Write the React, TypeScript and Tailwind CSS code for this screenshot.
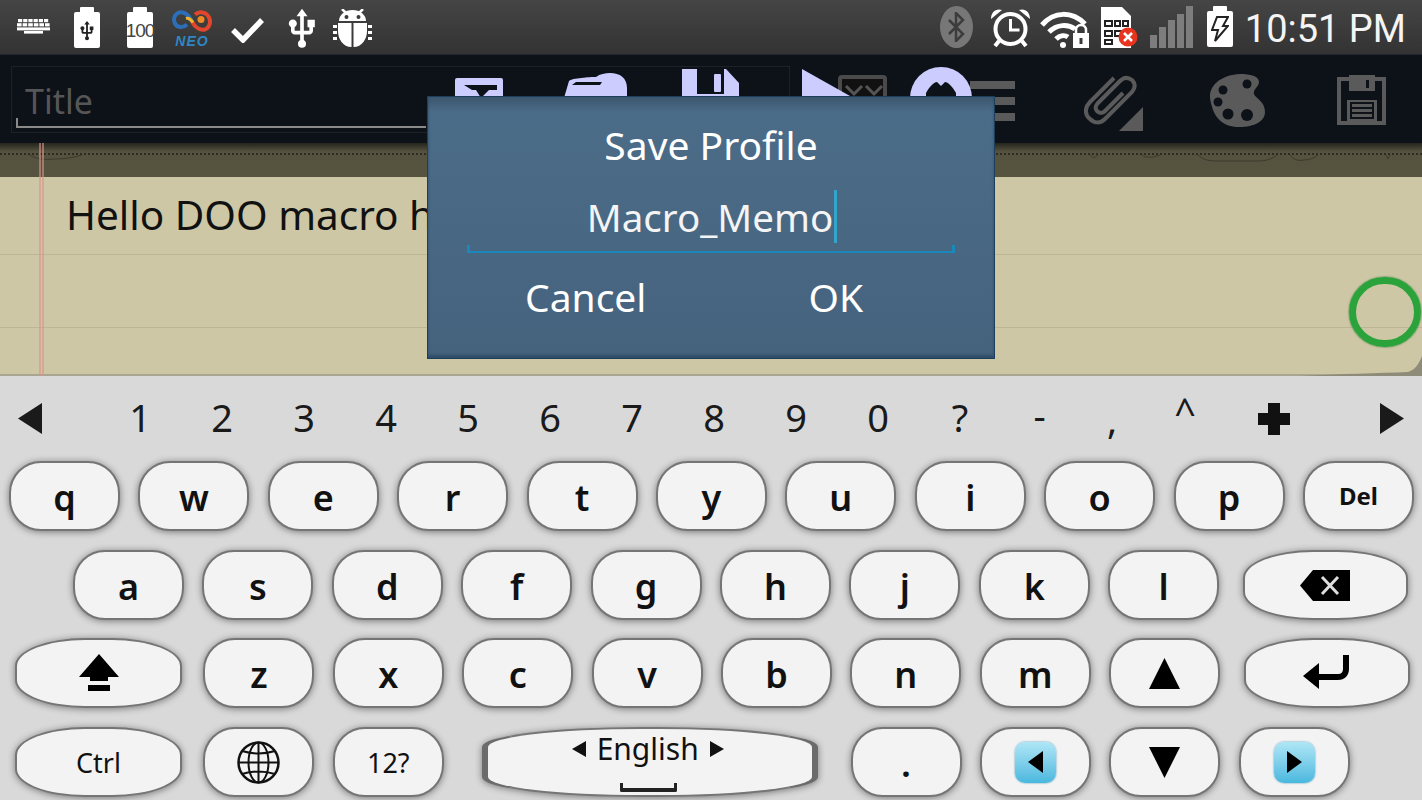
import * as React from 'react';
import { MdUsb } from 'react-icons/md';

const SANS = 'font-["Noto_Sans","Open_Sans",sans-serif]';

const rowOne = ['q', 'w', 'e', 'r', 't', 'y', 'u', 'i', 'o', 'p'];
const rowTwo = ['a', 's', 'd', 'f', 'g', 'h', 'j', 'k', 'l'];
const rowThree = ['z', 'x', 'c', 'v', 'b', 'n', 'm'];
const digits = ['1', '2', '3', '4', '5', '6', '7', '8', '9', '0', '?'];

const BatteryShell = ({ className, children }: { className?: string; children?: React.ReactNode }) => (
  <div className={`relative flex h-[41px] w-[26px] shrink-0 flex-col items-center ${className ?? ''}`}>
    <div className="h-[5px] w-[14px] rounded-t-[1px] bg-white" />
    <div className="flex w-full flex-1 items-center justify-center rounded-[2px] bg-white">{children}</div>
  </div>
);

const KeyboardIcon = () => (
  <svg className="ml-[17px] mt-[19px] shrink-0" width="33" height="15" viewBox="0 0 33 15" fill="#fff">
    {[0, 1, 2, 3, 4, 5].map((i) => (
      <rect key={i} x={1 + i * 5.2} y="0" width="4.2" height="3.2" />
    ))}
    {[0, 1, 2, 3, 4, 5].map((i) => (
      <rect key={i} x={0 + i * 5.6} y="4.2" width="4.6" height="3.2" />
    ))}
    <rect x="0" y="8.4" width="33" height="3" />
    <rect x="7" y="12" width="19" height="2.6" />
  </svg>
);

const NeoLogo = () => (
  <div className="ml-[18px] mt-[9px] flex w-[42px] shrink-0 flex-col items-center">
    <svg width="40" height="24" viewBox="0 0 40 23" fill="none">
      <path d="M20 12C16 4 11 2 7 3 2 5 1 10 3 14c2 4 8 5 12 1" stroke="#2c6fb8" strokeWidth="4" />
      <path d="M20 12c3 6 8 9 13 8 5-2 6-8 4-12-2-5-9-7-14-3" stroke="#e2462c" strokeWidth="4" />
      <path d="M14 9c3-1 5 1 7 4" stroke="#f3b52a" strokeWidth="3" />
      <circle cx="29" cy="10" r="3.5" fill="#f08a24" />
    </svg>
    <span className="mt-[1px] font-['Liberation_Sans',sans-serif] text-[14px] font-bold italic leading-[14px] tracking-[1px] text-[#2f86c5]">
      NEO
    </span>
  </div>
);

const BugIcon = () => (
  <svg className="ml-[9px] mt-[9px] shrink-0" width="39" height="38" viewBox="0 0 39 38" fill="#fff">
    <path d="M9 0l6 6M30 0l-6 6" stroke="#fff" strokeWidth="2.5" />
    <path d="M6 12a13.500 11 0 0 1 27 0z" />
    <circle cx="13.500" cy="8" r="2" fill="#3a3a3a" />
    <circle cx="25.500" cy="8" r="2" fill="#3a3a3a" />
    <path d="M5 14h13.500v24C10 38 5 30 5 22zM20.500 14H34v8c0 8-5 16-13.500 16z" />
    <path d="M0 16h4v3H0zM0 22h4v3H0zM0 28h4v3H0zM35 16h4v3h-4zM35 22h4v3h-4zM35 28h4v3h-4z" />
  </svg>
);

const BluetoothIcon = () => (
  <div className="ml-auto mt-[6px] flex h-[42px] w-[33px] shrink-0 items-center justify-center rounded-[50%] bg-[#777]">
    <svg width="18" height="30" viewBox="0 0 18 30" fill="none" stroke="#3c3c3c" strokeWidth="2.500">
      <path d="M2 8l14 14-7 7V1l7 7L2 22" />
    </svg>
  </div>
);

const AlarmIcon = () => (
  <svg className="ml-[17px] mt-[8px] shrink-0" width="41" height="40" viewBox="0 0 41 40" fill="none">
    <circle cx="20.500" cy="21" r="15" stroke="#fff" strokeWidth="4" />
    <path d="M20.500 11v11h9" stroke="#fff" strokeWidth="3" />
    <path d="M1 11C1 4 6 0 12 2zM40 11c0-7-5-11-11-9z" fill="#fff" />
    <path d="M9 33l-4 5M32 33l4 5" stroke="#fff" strokeWidth="4" />
  </svg>
);

const WifiLockIcon = () => (
  <svg className="ml-[9px] mt-[11px] shrink-0" width="50" height="37" viewBox="0 0 50 37" fill="none">
    <path d="M2 14C14 0 32 0 45 13" stroke="#fff" strokeWidth="5" />
    <path d="M9 21c8-8 19-8 26-3" stroke="#fff" strokeWidth="5" />
    <path d="M16 28c4-4 9-4 12-2" stroke="#fff" strokeWidth="5" />
    <circle cx="23" cy="34" r="3" fill="#fff" />
    <path d="M33 22h16v15H33z" fill="#fff" />
    <path d="M36 22v-3a5 5 0 0 1 10 0v3" stroke="#fff" strokeWidth="2.500" />
    <rect x="39.500" y="27" width="3" height="6" fill="#3a3a3a" />
  </svg>
);

const SimIcon = () => (
  <svg className="ml-[11px] mt-[7px] shrink-0" width="38" height="41" viewBox="0 0 38 41">
    <path d="M0 0h21l9 9v32H0z" fill="#fff" />
    <path d="M4 14h7v5H4zM14 14h5v5h-5zM22 14h5v5h-5zM4 24h7v5H4zM14 24h6v5h-6zM4 33h7v4H4z" fill="none" stroke="#222" strokeWidth="2" />
    <circle cx="27" cy="30" r="9.500" fill="#e8341c" />
    <path d="M23 26l8 8M31 26l-8 8" stroke="#fff" strokeWidth="2.500" />
  </svg>
);

const SignalIcon = () => (
  <div className="ml-[11px] mt-[6px] flex h-[42px] w-[43px] shrink-0 items-end gap-[2px]">
    {[13, 21, 28, 34, 42].map((h) => (
      <div key={h} className="w-[7px] bg-[#7d7d7d]" style={{ height: h }} />
    ))}
  </div>
);

const StatusBar = () => (
  <div className="flex h-[54px] shrink-0 bg-gradient-to-b from-[#454545] to-[#333333]">
    <KeyboardIcon />
    <BatteryShell className="ml-[24px] mt-[7px]">
      <MdUsb className="mt-[2px] text-[#222]" size={22} />
    </BatteryShell>
    <BatteryShell className="ml-[27px] mt-[7px]">
      <span className="font-['Liberation_Sans',sans-serif] text-[19px] font-normal leading-none tracking-[-1px] text-[#444]">100</span>
    </BatteryShell>
    <NeoLogo />
    <svg className="ml-[18px] mt-[17px] shrink-0" width="33" height="26" viewBox="0 0 33 26" fill="none">
      <path d="M2 13l10 10L31 3" stroke="#fff" strokeWidth="5.500" />
    </svg>
    <MdUsb className="ml-[16px] mt-[7px] shrink-0 text-white" size={44} />
    <BugIcon />
    <BluetoothIcon />
    <AlarmIcon />
    <WifiLockIcon />
    <SimIcon />
    <SignalIcon />
    <BatteryShell className="ml-[14px] mt-[6px]">
      <svg width="18" height="28" viewBox="0 0 18 28" fill="none" stroke="#222" strokeWidth="2">
        <path d="M6 2h11l-5 9h5L4 26l3-11H1z" />
      </svg>
    </BatteryShell>
    <span className="ml-[12px] mr-[16px] mt-[5px] font-['Roboto',sans-serif] text-[38px] leading-[48px] text-[#f4f4f4]">10:51 PM</span>
  </div>
);

// the row of icons the dialog sits on top of, only their tops show
const LavenderIcons = () => (
  <svg className="absolute left-[450px] top-[12px]" width="530" height="50" viewBox="0 0 530 50" fill="#ccccff">
    <path d="M7 12h44a2 2 0 0 1 2 2v26H5V14a2 2 0 0 1 2-2z" />
    <path d="M14 19h33v5h-8l-8 8-5-8h-4z" fill="#0d1118" />
    <path d="M114 32l5-17c3-3 21-4 27-4 4-3 9-4 14-4 10 0 17 5 17 15v18h-63z" />
    <path d="M122 19l4-3h26l-2 3z" fill="#0d1118" />
    <path d="M232 3h44l13 14v23h-57z" />
    <path d="M247 3h27v25h-27z" fill="#0d1118" />
    <rect x="264" y="8" width="7" height="18" rx="1" />
    <rect x="390" y="11" width="45" height="32" rx="2" fill="#111" stroke="#4a4a4a" strokeWidth="4" />
    <path d="M396 20l8 8 8-8M416 20l8 8 8-8" fill="none" stroke="#555" strokeWidth="3" />
    <path d="M352 3l48 27v10h-48z" />
    <circle cx="491" cy="32" r="31" />
    <path d="M476 27c4-7 8-11 11-11l4 4 4-4c3 0 7 4 11 11v6h-30z" fill="#0d1118" />
  </svg>
);

const PaperclipIcon = () => (
  <svg className="shrink-0" width="60" height="57" viewBox="0 0 60 57" fill="none">
    <path
      d="M30 3L6 27c-6 6-5 13 0 17 4 4 10 5 15 0L48 17c4-5 3-9 0-12-4-3-8-3-12 1L14 28c-3 3-3 6-1 8 3 3 6 2 8 0l18-18"
      stroke="#5a5a5a"
      strokeWidth="4"
    />
    <path d="M59 32v24H35z" fill="#5a5a5a" />
  </svg>
);

const PaletteIcon = () => (
  <svg className="shrink-0" width="58" height="55" viewBox="0 0 58 55">
    <path d="M3 30C-2 14 12 2 32 1c10 0 19 2 19 8 0 5-6 7-5 12 1 4 11 7 11 18 0 9-10 15-26 15C14 54 6 44 3 30z" fill="#5a5a5a" />
    <circle cx="39" cy="11" r="4.500" fill="#0d1118" />
    <circle cx="15" cy="17" r="4.500" fill="#0d1118" />
    <circle cx="10" cy="29" r="4.500" fill="#0d1118" />
    <circle cx="20" cy="41" r="5.500" fill="#0d1118" />
    <circle cx="39" cy="42" r="6" fill="#0d1118" />
  </svg>
);

const FloppyIcon = () => (
  <svg className="shrink-0" width="49" height="50" viewBox="0 0 49 50" fill="none">
    <path d="M2 4h45v44H2z" stroke="#5a5a5a" strokeWidth="4" />
    <path d="M12 0h26v16H12z" fill="#5a5a5a" />
    <rect x="29" y="5" width="3" height="8" fill="#0d1118" />
    <path d="M10 25h30v21H10z" fill="#5a5a5a" />
    <path d="M14 28h22v15H14z" fill="#5a5a5a" stroke="#0d1118" strokeWidth="2" />
    <path d="M14 33h22M14 38h22" stroke="#0d1118" strokeWidth="2" />
  </svg>
);

const Toolbar = () => (
  <div className="relative flex h-[89px] shrink-0 items-start bg-[#0d1118] shadow-[inset_0_1px_0_#23262c]">
    <div className="ml-[11px] mt-[12px] h-[67px] w-[779px] shrink-0 border border-[#1d2026] pl-[13px] pt-[12px]">
      <span className={`${SANS} text-[34px] leading-[44px] text-[#565656]`}>Title</span>
    </div>
    <div className="ml-[180px] mt-[27px] flex w-[45px] shrink-0 flex-col gap-[8px]">
      <div className="h-[8px] bg-[#5a5a5a]" />
      <div className="h-[8px] bg-[#5a5a5a]" />
      <div className="h-[8px] bg-[#5a5a5a]" />
    </div>
    <div className="ml-[69px] mt-[21px]">
      <PaperclipIcon />
    </div>
    <div className="ml-[64px] mt-[19px]">
      <PaletteIcon />
    </div>
    <div className="ml-[71px] mt-[21px]">
      <FloppyIcon />
    </div>
    <div className="absolute left-[16px] top-[64px] h-[10px] w-[410px] border-b-2 border-l-2 border-[#8a8a8a]" />
    <LavenderIcons />
  </div>
);

const Strip = () => (
  <div className="relative flex h-[34px] shrink-0 flex-col bg-gradient-to-b from-[#26251d] from-[0%] via-[#55523f] via-[25%] to-[#56533f]">
    <div className="mt-[10px] border-b-2 border-dotted border-[#2d2c22]" />
    <svg className="absolute left-0 top-[11px]" width="1422" height="10" viewBox="0 0 1422 10" fill="none" stroke="#3c3a2c" strokeWidth="1">
      <path d="M30 1c6 4 14 5 24 4 10 0 18-1 28-4M1090 1l4 3 4-3M1142 1c4 3 10 3 18 0M1198 1c6 5 10 6 20 6h40c8 0 14-2 19-6M1290 1c4 5 8 6 14 5 6 0 10-2 14-5M1386 1l2 4 2-4" />
    </svg>
  </div>
);

const Note = () => (
  <div className="relative flex h-[199px] shrink-0 flex-col border-b-2 border-[#a8a593] bg-[#cdc7a6]">
    <p className={`${SANS} ml-[66px] mt-[13px] h-[50px] whitespace-nowrap text-[40.500px] leading-[50px] text-[#111]`}>Hello DOO macro h</p>
    <div className="mt-[14px] h-px bg-[#bcb695]" />
    <div className="mt-[72px] h-px bg-[#bcb695]" />
    <svg className="absolute bottom-[-2px] right-0" width="122" height="20" viewBox="0 0 122 20" fill="#8e8b78">
      <path d="M0 20c40-2 80-3 108-4 7-2 11-8 14-16v20z" />
    </svg>
    <div className="absolute right-[1px] top-[100px] h-[70px] w-[72px] rounded-full border-[7px] border-[#2aa33a] shadow-[0_0_2px_#1a6a25]" />
  </div>
);

const Dialog = () => (
  <div className="absolute left-[427px] top-[96px] flex h-[263px] w-[568px] flex-col items-center border border-[#1d3f5e] bg-gradient-to-b from-[#3c566e] from-[0%] via-[#4b6c88] via-[6%] to-[#46637e] to-[97%] shadow-[inset_0_-3px_3px_#2f4d69]">
    <h2 className={`${SANS} mt-[23px] text-[39px] leading-[50px] text-white`}>Save Profile</h2>
    <div className="relative mt-[19px] flex h-[64px] w-[488px] justify-center">
      <span className={`${SANS} ml-[2px] mt-[1px] text-[38.500px] leading-[54px] text-[#f4f4f4]`}>Macro_Memo</span>
      <div className="ml-[1px] mt-[1px] h-[53px] w-[3px] bg-[#33a5cc]" />
      <div className="absolute bottom-0 left-0 h-[8px] w-full border-b-2 border-l-[3px] border-r-[3px] border-[#1b88bb]" />
    </div>
    <div className={`${SANS} mt-[19px] flex w-full text-[39px] leading-[50px] text-white`}>
      <span className="ml-[97px]">Cancel</span>
      <span className="ml-[162px]">OK</span>
    </div>
  </div>
);

const NumberRow = () => (
  <div className={`${SANS} flex h-[85px] items-center text-[38px] leading-[50px] text-[#1a1a1a]`}>
    <div className="w-[99px] pl-[18px]">
      <svg width="24" height="31" viewBox="0 0 24 31" fill="#1a1a1a">
        <path d="M24 0v31L0 15.500z" />
      </svg>
    </div>
    {digits.map((d) => (
      <span key={d} className="mt-[-4px] w-[82px] text-center">
        {d}
      </span>
    ))}
    <span className="mt-[-8px] w-[77px] text-center">-</span>
    <span className="w-[68px] text-center">,</span>
    <span className="mt-[-16px] w-[78px] text-center">^</span>
    <div className="flex w-[100px] justify-center">
      <svg width="34" height="34" viewBox="0 0 34 34" fill="#111">
        <path d="M11 1h12v10h10v12H23v10H11V23H1V11h10z" />
      </svg>
    </div>
    <svg className="ml-[56px]" width="24" height="31" viewBox="0 0 24 31" fill="#1a1a1a">
      <path d="M0 0v31l24-15.500z" />
    </svg>
  </div>
);

const Key = ({ className, children }: { className?: string; children?: React.ReactNode }) => (
  <div
    className={`${SANS} flex h-[70px] shrink-0 items-center justify-center border-2 border-[#757575] bg-[#f3f3f3] text-[#111] shadow-[0_1px_7px_rgba(0,0,0,0.45)] ${className ?? ''}`}
  >
    {children}
  </div>
);

const LetterKey = ({ label }: { label: string }) => (
  <Key className="w-[111px] rounded-[32px] text-[36px] font-semibold leading-none">
    <span className="mt-[4px]">{label}</span>
  </Key>
);

const ArrowKey = ({ dir }: { dir: 'left' | 'right' }) => (
  <Key className="w-[111px] rounded-[32px]">
    <div className="flex h-[41px] w-[41px] items-center justify-center rounded-[10px] bg-gradient-to-b from-[#aee6f6] to-[#48b8de] shadow-[0_0_2px_#3b8fb0]">
      <svg width="15" height="22" viewBox="0 0 15 22" fill="#000">
        <path d={dir === 'right' ? 'M0 0v22l15-11z' : 'M15 0v22L0 11z'} />
      </svg>
    </div>
  </Key>
);

const Triangle = ({ down }: { down?: boolean }) => (
  <svg width="31" height="31" viewBox="0 0 31 31" fill="#000">
    <path d={down ? 'M0 0h31L15.500 31z' : 'M15.500 0L31 31H0z'} />
  </svg>
);

const ShiftIcon = () => (
  <svg width="40" height="38" viewBox="0 0 40 38" fill="#000">
    <path d="M20 0l20 23H29v4H11v-4H0z" />
    <rect x="9" y="31" width="22" height="6" />
  </svg>
);

const BackspaceIcon = () => (
  <svg width="50" height="31" viewBox="0 0 50 31">
    <path d="M13 0h37v31H13L0 15.500z" fill="#000" />
    <path d="M22 7l16 17M38 7L22 24" stroke="#ddd" strokeWidth="3" />
  </svg>
);

const EnterIcon = () => (
  <svg width="48" height="36" viewBox="0 0 48 36" fill="none">
    <path d="M43 0v14c0 5-3 8-8 8H14" stroke="#000" strokeWidth="6" />
    <path d="M16 8v26L0 21z" fill="#000" />
  </svg>
);

const GlobeIcon = () => (
  <svg width="43" height="43" viewBox="0 0 43 43" fill="none" stroke="#111" strokeWidth="2">
    <circle cx="21.500" cy="21.500" r="20" strokeWidth="2.500" />
    <ellipse cx="21.500" cy="21.500" rx="10" ry="20" />
    <path d="M21.500 1.500v40M1.500 21.500h40M5 10c10 3 23 3 33 0M5 33c10-3 23-3 33 0" />
  </svg>
);

const Keyboard = () => (
  <div className="flex flex-1 flex-col bg-[#d9d9d9]">
    <NumberRow />
    <div className="flex gap-[18.400px] pl-[9px]">
      {rowOne.map((k) => (
        <LetterKey key={k} label={k} />
      ))}
      <Key className="w-[111px] rounded-[32px] text-[24px] font-bold leading-none">Del</Key>
    </div>
    <div className="mt-[19px] flex gap-[18.400px] pl-[73px]">
      {rowTwo.map((k) => (
        <LetterKey key={k} label={k} />
      ))}
      <Key className="ml-[5px] w-[165px] rounded-[70px/28px]">
        <BackspaceIcon />
      </Key>
    </div>
    <div className="mt-[18px] flex gap-[18.400px] pl-[15px]">
      <Key className="mr-[3px] w-[167px] rounded-[70px/28px]">
        <ShiftIcon />
      </Key>
      {rowThree.map((k) => (
        <LetterKey key={k} label={k} />
      ))}
      <Key className="w-[111px] rounded-[32px]">
        <Triangle />
      </Key>
      <Key className="ml-[5px] w-[166px] rounded-[70px/28px]">
        <EnterIcon />
      </Key>
    </div>
    <div className="mt-[19px] flex gap-[18.400px] pl-[15px]">
      <Key className="mr-[3px] w-[167px] rounded-[70px/28px] text-[27px] leading-none">Ctrl</Key>
      <Key className="w-[111px] rounded-[32px]">
        <GlobeIcon />
      </Key>
      <Key className="w-[111px] rounded-[32px] text-[27px] leading-none">12?</Key>
      <Key className="relative ml-[20px] mr-[14px] w-[336px] flex-col rounded-[160px/20px] border-x-[6px] border-x-[#6b6b6b]">
        <div className="ml-[-5px] mt-[-26px] flex items-center gap-[11px] text-[30px] leading-[40px]">
          <svg width="14" height="16" viewBox="0 0 14 16" fill="#111">
            <path d="M14 0v16L0 8z" />
          </svg>
          <span>English</span>
          <svg width="14" height="16" viewBox="0 0 14 16" fill="#111">
            <path d="M0 0v16l14-8z" />
          </svg>
        </div>
        <div className="absolute bottom-[3px] left-[132px] h-[9px] w-[57px] rounded-b-[2px] border-x-[3px] border-b-[4px] border-[#222]" />
      </Key>
      <Key className="w-[111px] rounded-[32px] text-[36px] font-semibold leading-none">
        <span className="mt-[4px]">.</span>
      </Key>
      <ArrowKey dir="left" />
      <Key className="w-[111px] rounded-[32px]">
        <Triangle down />
      </Key>
      <ArrowKey dir="right" />
    </div>
  </div>
);

export default function App() {
  return (
    <div className="relative flex h-[800px] w-[1422px] flex-col overflow-hidden">
      <StatusBar />
      <Toolbar />
      <Strip />
      <Note />
      <div className="absolute left-[39px] top-[143px] h-[233px] w-[5px] border-x-2 border-[#d9958a] opacity-60" />
      <Keyboard />
      <Dialog />
    </div>
  );
}
